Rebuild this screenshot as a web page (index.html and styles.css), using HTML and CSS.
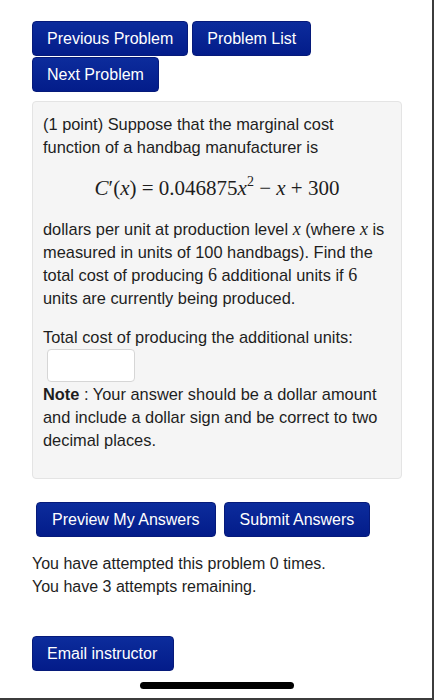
FILE: index.html
```html
<!DOCTYPE html>
<html>
<head>
<link rel="stylesheet" href="styles.css">
</head>
<body>
<div class="screen">
  <div class="nav-buttons">
    <a class="btn" href="#">Previous Problem</a>
    <a class="btn" href="#">Problem List</a>
    <a class="btn" href="#">Next Problem</a>
  </div>

  <div class="well">
    <p>(1 point) Suppose that the marginal cost function of a handbag manufacturer is</p>
    <div class="equation">
      <i>C</i>&prime;(<i>x</i>) = 0.046875<i>x</i><sup>2</sup> &minus; <i>x</i> + 300
    </div>
    <p>dollars per unit at production level <i class="mvar">x</i> (where <i class="mvar">x</i> is measured in units of 100 handbags). Find the total cost of producing <span class="mnum">6</span> additional units if <span class="mnum">6</span> units are currently being produced.</p>
    <p class="answer">Total cost of producing the additional units:<br>
      <input class="answer-box" type="text">
      <b>Note</b> : Your answer should be a dollar amount and include a dollar sign and be correct to two decimal places.
    </p>
  </div>

  <div class="submit-buttons">
    <button class="btn" type="button">Preview My Answers</button>
    <button class="btn" type="button">Submit Answers</button>
  </div>

  <p class="attempts">You have attempted this problem 0 times.<br>
  You have 3 attempts remaining.</p>

  <a class="btn email" href="#">Email instructor</a>

  <div class="home-bar"></div>
</div>
</body>
</html>
```

FILE: styles.css
```css
html, body {
  margin: 0;
  padding: 0;
  background: #fff;
}

.screen {
  box-sizing: border-box;
  width: 434px;
  height: 700px;
  border-right: 2px solid #3c3c3c;
  border-bottom: 2px solid #3c3c3c;
  padding: 21px 0 0 32px;
  font-family: "Liberation Sans", Arial, sans-serif;
  font-size: 16px;
  line-height: 23px;
  color: #1e1e1e;
  overflow: hidden;
}

.btn {
  display: inline-block;
  box-sizing: border-box;
  height: 35px;
  padding: 0 14px;
  border: 1px solid #061a7a;
  border-radius: 4px;
  background: linear-gradient(#0c2c9c, #031c8a);
  color: #fff;
  font-family: inherit;
  font-size: 16px;
  line-height: 33px;
  text-decoration: none;
  cursor: pointer;
}

.nav-buttons {
  display: flex;
  flex-wrap: wrap;
  gap: 1px 4px;
  width: 370px;
}

.well {
  box-sizing: border-box;
  width: 370px;
  margin-top: 9px;
  padding: 11px 14px 26px 10px;
  background: #f5f5f5;
  border: 1px solid #e4e4e4;
  border-radius: 4px;
}

.well p {
  margin: 0;
  font-size: 16.4px;
}

.equation {
  margin: 16px 0 16px 4px;
  text-align: center;
  font-family: "Liberation Serif", "Times New Roman", serif;
  font-size: 21px;
  line-height: 27px;
}

.equation sup {
  font-size: 14px;
  line-height: 0;
  vertical-align: 9px;
}

.mvar, .mnum {
  font-family: "Liberation Serif", "Times New Roman", serif;
  font-size: 18px;
  line-height: 0;
}

.answer {
  margin-top: 16px !important;
}

.answer-box {
  display: block;
  box-sizing: border-box;
  width: 88px;
  height: 33px;
  margin: 0 0 1px 4px;
  border: 1px solid #d6d6d6;
  border-radius: 4px;
  background: #fff;
}

.submit-buttons {
  display: flex;
  gap: 8px;
  margin: 23px 0 0 4px;
}

.submit-buttons .btn {
  padding: 0 15px;
}

.attempts {
  margin: 15px 0 38px;
}

.email {
  display: block;
  width: 142px;
}

.home-bar {
  width: 154px;
  height: 7px;
  margin: 11px 0 0 108px;
  border-radius: 4px;
  background: #000;
}
```
